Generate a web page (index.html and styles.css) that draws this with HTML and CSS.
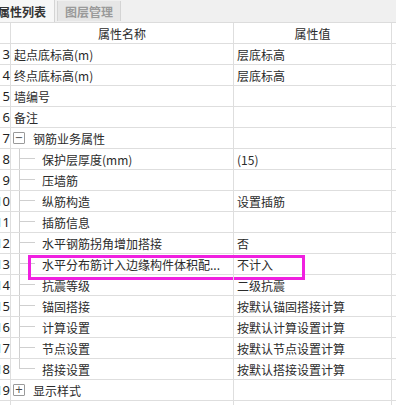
FILE: index.html
```html
<!DOCTYPE html>
<html lang="zh-CN">
<head>
    <meta charset="UTF-8">
    <meta name="viewport" content="width=device-width, initial-scale=1.0">
    <title>属性列表</title>
    <link rel="stylesheet" href="styles.css">
</head>
<body>
    <div class="panel">
        <div class="tabs">
            <div class="tab active">属性列表</div>
            <div class="tab">图层管理</div>
        </div>

        <div class="grid">
            <div class="row head">
                <div class="num"></div>
                <div class="name">属性名称</div>
                <div class="val">属性值</div>
            </div>
            <div class="row">
                <div class="num">3</div>
                <div class="name root">起点底标高(m)</div>
                <div class="val">层底标高</div>
            </div>
            <div class="row">
                <div class="num">4</div>
                <div class="name root">终点底标高(m)</div>
                <div class="val">层底标高</div>
            </div>
            <div class="row">
                <div class="num">5</div>
                <div class="name root">墙编号</div>
                <div class="val"></div>
            </div>
            <div class="row">
                <div class="num">6</div>
                <div class="name root">备注</div>
                <div class="val"></div>
            </div>
            <div class="row">
                <div class="num">7</div>
                <div class="name group"><span class="toggle">−</span>钢筋业务属性</div>
                <div class="val"></div>
            </div>
            <div class="row">
                <div class="num">8</div>
                <div class="name child">保护层厚度(mm)</div>
                <div class="val">(15)</div>
            </div>
            <div class="row">
                <div class="num">9</div>
                <div class="name child">压墙筋</div>
                <div class="val"></div>
            </div>
            <div class="row">
                <div class="num">10</div>
                <div class="name child">纵筋构造</div>
                <div class="val">设置插筋</div>
            </div>
            <div class="row">
                <div class="num">11</div>
                <div class="name child">插筋信息</div>
                <div class="val"></div>
            </div>
            <div class="row">
                <div class="num">12</div>
                <div class="name child">水平钢筋拐角增加搭接</div>
                <div class="val">否</div>
            </div>
            <div class="row marked">
                <div class="num">13</div>
                <div class="name child">水平分布筋计入边缘构件体积配...</div>
                <div class="val">不计入</div>
                <div class="mark"></div>
            </div>
            <div class="row">
                <div class="num">14</div>
                <div class="name child">抗震等级</div>
                <div class="val">二级抗震</div>
            </div>
            <div class="row">
                <div class="num">15</div>
                <div class="name child">锚固搭接</div>
                <div class="val">按默认锚固搭接计算</div>
            </div>
            <div class="row">
                <div class="num">16</div>
                <div class="name child">计算设置</div>
                <div class="val">按默认计算设置计算</div>
            </div>
            <div class="row">
                <div class="num">17</div>
                <div class="name child">节点设置</div>
                <div class="val">按默认节点设置计算</div>
            </div>
            <div class="row">
                <div class="num">18</div>
                <div class="name child last">搭接设置</div>
                <div class="val">按默认搭接设置计算</div>
            </div>
            <div class="row">
                <div class="num">19</div>
                <div class="name group"><span class="toggle">+</span>显示样式</div>
                <div class="val"></div>
            </div>
            <div class="row tail">
                <div class="num"></div>
                <div class="name"></div>
                <div class="val"></div>
            </div>
        </div>
    </div>
</body>
</html>
```

FILE: styles.css
```css
body {
    margin: 0;
    background: #fff;
    font-family: "Noto Sans CJK SC", "Noto Sans", sans-serif;
    font-size: 12px;
    color: #2b2b2b;
}

.panel {
    width: 396px;
    height: 405px;
    overflow: hidden;
}

.tabs {
    display: flex;
    height: 22px;
    background: #f0f0f0;
    border-bottom: 1px solid #dcdcdc;
    margin-left: -3px;
}
.tab {
    display: flex;
    align-items: center;
    padding: 0 8px 0 1px;
    font-weight: bold;
    color: #333;
    border-right: 1px solid #d4d4d4;
}
.tab.active {
    background: #f7f7f7;
    padding-right: 8px;
}
.tab + .tab {
    margin-left: 2px;
    margin-top: 1px;
    padding: 0 7px;
    height: 20px;
    background: #e6e6e6;
    color: #9a9a9a;
    border-left: 1px solid #d4d4d4;
}

.grid {
    display: flex;
    flex-direction: column;
}

.row {
    position: relative;
    display: flex;
    height: 20px;
    border-bottom: 1px solid #dedede;
}
.row.tail {
    border-bottom: none;
    height: 10px;
}

.row > div {
    display: flex;
    align-items: center;
    white-space: nowrap;
    overflow: hidden;
}

.num {
    width: 10px;
    justify-content: flex-end;
    border-right: 1px solid #dedede;
    font-family: "Noto Sans", sans-serif;
    font-size: 13px;
    color: #222;
}
.name {
    position: relative;
    width: 222px;
    border-right: 1px solid #dedede;
}
.val {
    width: 154px;
    padding-left: 3px;
    border-right: 1px solid #dedede;
}

.head .name,
.head .val {
    justify-content: center;
    padding: 0;
}
.head .val {
    width: 157px;
}

.root {
    padding-left: 3px;
    width: 219px;
}

.group {
    padding-left: 2px;
    width: 220px;
}
.toggle {
    display: flex;
    align-items: center;
    justify-content: center;
    width: 10px;
    height: 10px;
    margin-right: 8px;
    border: 1px solid #9a9a9a;
    border-radius: 1px;
    font-family: "DejaVu Sans", sans-serif;
    font-size: 10px;
    line-height: 1;
    color: #444;
}

.child {
    padding-left: 31px;
    width: 191px;
}
.child::before {
    content: "";
    position: absolute;
    left: 8px;
    top: -1px;
    bottom: -1px;
    border-left: 1px solid #cfcfcf;
}
.child.last::before {
    bottom: 10px;
}
.child::after {
    content: "";
    position: absolute;
    left: 9px;
    top: 9px;
    width: 15px;
    border-top: 1px solid #cfcfcf;
}

.row > .mark {
    position: absolute;
    left: 28px;
    top: 1px;
    width: 271px;
    height: 19px;
    border: 3px solid #f020e0;
    overflow: visible;
}
```
